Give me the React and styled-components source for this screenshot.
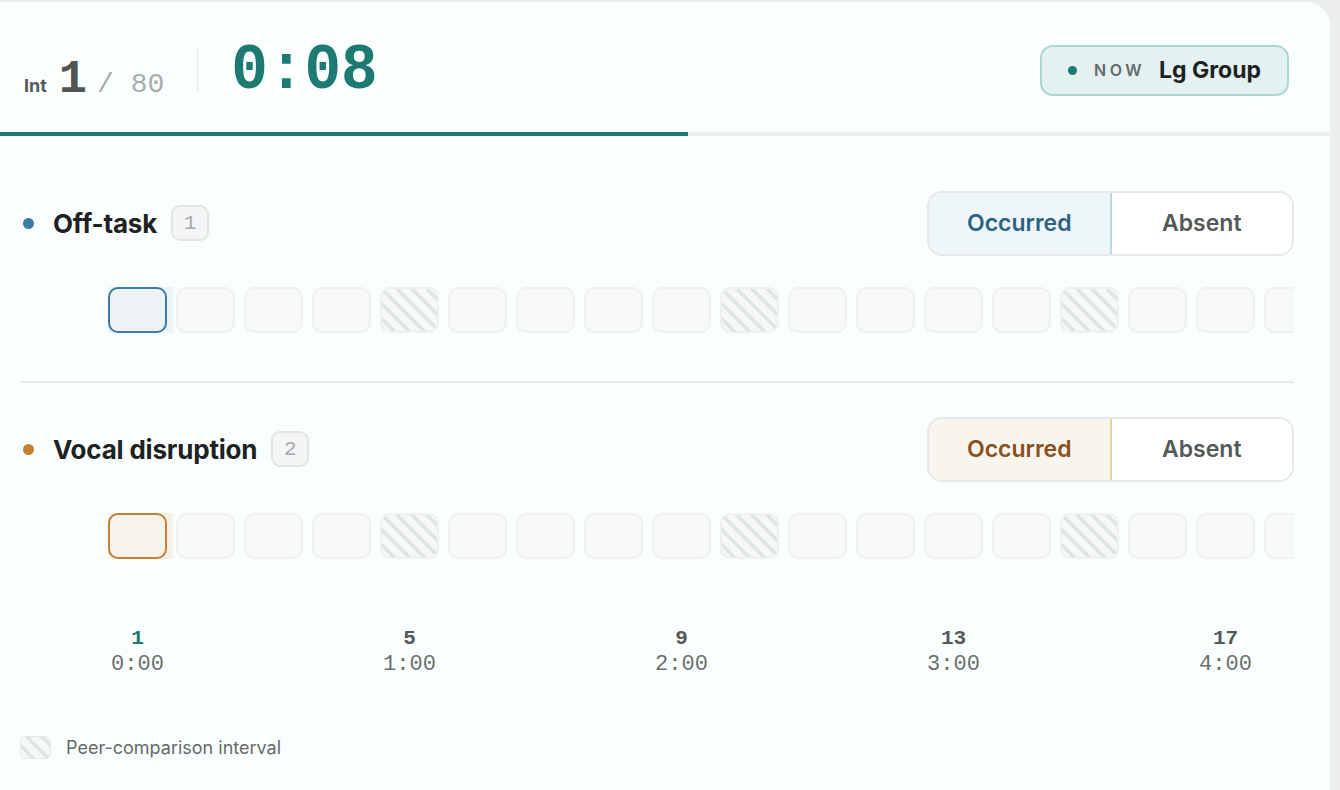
import React from "react";
import styled, { createGlobalStyle, css } from "styled-components";

const Global = createGlobalStyle`
  html, body { margin: 0; padding: 0; background: #eceeee; }
  body { font-family: Inter, "Noto Sans", sans-serif; }
  * { box-sizing: border-box; }
`;

const Page = styled.div`
  padding: 2px 10px 0 0;
  height: 790px;
  overflow: hidden;
`;

const Card = styled.div`
  background: #fbfefe;
  border-top-right-radius: 24px;
  height: 788px;
  overflow: hidden;
`;

const Header = styled.header`
  height: 134px;
  display: flex;
  flex-direction: column;
`;

const HeaderRow = styled.div`
  flex: 1;
  display: flex;
  align-items: center;
  padding: 6px 41px 0 24px;
`;

const Counter = styled.div`
  display: flex;
  align-items: baseline;
  padding-top: 18px;
`;

const IntLabel = styled.span`
  font-size: 18px;
  font-weight: 700;
  color: #555a5a;
  margin-right: 12px;
`;

const IntNum = styled.span`
  font-family: "Liberation Mono", monospace;
  font-weight: 700;
  font-size: 47px;
  color: #505454;
  line-height: 1;
`;

const IntTotal = styled.span`
  font-family: "Liberation Mono", monospace;
  font-size: 28px;
  color: #a8acac;
  margin-left: 10px;
`;

const VDivider = styled.div`
  width: 1px;
  height: 44px;
  background: #e6e9e9;
  margin: 0 33px 0 33px;
`;

const Clock = styled.div`
  font-family: "Liberation Mono", monospace;
  font-weight: 700;
  font-size: 61px;
  color: #1d7a72;
  line-height: 1;
  transform: scaleY(1.06);
`;

const NowBadge = styled.div`
  margin-left: auto;
  height: 51px;
  display: flex;
  align-items: center;
  padding: 0 26px 0 26px;
  background: #e3f2f1;
  border: 2px solid #acd6d1;
  border-radius: 13px;
`;

const NowDot = styled.span`
  width: 9px;
  height: 9px;
  border-radius: 50%;
  background: #1d7a72;
  margin-right: 17px;
`;

const NowLabel = styled.span`
  font-size: 16px;
  font-weight: 600;
  letter-spacing: 3.5px;
  color: #666a6a;
  margin-right: 14px;
`;

const NowName = styled.span`
  font-size: 23px;
  font-weight: 700;
  color: #1e2222;
`;

const Progress = styled.div`
  height: 4px;
  background: #eceeee;
`;

const ProgressFill = styled.div`
  height: 100%;
  background: #1d7a72;
`;

const Body = styled.main`
  padding: 20px 36px 0 20px;
`;

const Behavior = styled.section`
  padding: ${(p) => (p.$first ? "35px 0 48px" : "34px 0 48px")};
  border-bottom: ${(p) => (p.$last ? "none" : "2px solid #e8ebeb")};
`;

const BehaviorHead = styled.div`
  display: flex;
  align-items: center;
  height: 64px;
`;

const Dot = styled.span`
  width: 11px;
  height: 11px;
  border-radius: 50%;
  background: ${(p) => p.$color};
  margin: 0 19px 0 3px;
`;

const Name = styled.span`
  font-size: 26px;
  font-weight: 700;
  color: #1f2222;
  letter-spacing: -0.2px;
`;

const Key = styled.span`
  margin-left: 14px;
  width: 38px;
  height: 36px;
  display: inline-flex;
  align-items: center;
  justify-content: center;
  border: 2px solid #e2e5e6;
  background: #f3f5f6;
  border-radius: 9px;
  font-family: "Liberation Mono", monospace;
  font-size: 21px;
  color: #a5a9aa;
`;

const Toggle = styled.div`
  margin-left: auto;
  display: flex;
  width: 367px;
  height: 65px;
  border: 2px solid #e6e8e8;
  border-radius: 15px;
  overflow: hidden;
  background: #ffffff;
`;

const ToggleBtn = styled.button`
  flex: 1;
  border: none;
  margin: 0;
  font-family: Inter, "Noto Sans", sans-serif;
  font-size: 23px;
  font-weight: 600;
  cursor: pointer;
  ${(p) =>
    p.$active
      ? css`
          background: ${p.$bg};
          color: ${p.$fg};
          border-right: 2px solid ${p.$line};
        `
      : css`
          background: #ffffff;
          color: #555959;
        `}
`;

const Track = styled.div`
  margin-top: 32px;
  padding-left: 88px;
  display: flex;
  gap: 9px;
  overflow: hidden;
  isolation: isolate;
`;

const hatch = css`
  background: repeating-linear-gradient(
    45deg,
    #f6f7f7 0px,
    #f6f7f7 7px,
    #e1e4e6 7px,
    #e1e4e6 10.5px
  );
`;

const Cell = styled.div`
  position: relative;
  flex: 0 0 59px;
  height: 46px;
  border-radius: 10px;
  border: 2px solid #eff0f0;
  background: #f7f8f8;
  ${(p) => p.$peer && hatch}
  ${(p) =>
    p.$current &&
    css`
      border-color: ${p.$color};
      background: ${p.$bg};
      &::before {
        content: "";
        position: absolute;
        left: -2px;
        top: -2px;
        width: 65px;
        height: 46px;
        background: ${p.$halo};
        z-index: -1;
      }
    `}
`;

const Axis = styled.div`
  margin-top: 19px;
  padding-left: 88px;
  display: flex;
  gap: 9px;
  overflow: hidden;
`;

const Tick = styled.div`
  flex: 0 0 59px;
  display: flex;
  flex-direction: column;
  align-items: center;
  font-family: "Liberation Mono", monospace;
  font-size: 22px;
  line-height: 26px;
  white-space: nowrap;
`;

const TickNum = styled.span`
  font-weight: 700;
  font-size: 21px;
  color: ${(p) => (p.$current ? "#1d7a72" : "#555959")};
`;

const TickTime = styled.span`
  color: #6b6f6f;
`;

const Legend = styled.div`
  margin-top: 58px;
  display: flex;
  align-items: center;
  gap: 15px;
`;

const LegendSwatch = styled.span`
  width: 31px;
  height: 23px;
  border-radius: 5px;
  border: 1.5px solid #e6e9ea;
  ${hatch}
`;

const LegendText = styled.span`
  font-size: 18px;
  color: #666a6a;
`;

const behaviors = [
  {
    name: "Off-task",
    key: "1",
    color: "#3a7ca5",
    activeBg: "#eef6f9",
    activeFg: "#2a6384",
    line: "#bcd6e4",
    cellBg: "#edf3f6",
    halo: "#eaf3f7",
  },
  {
    name: "Vocal disruption",
    key: "2",
    color: "#c47f35",
    activeBg: "#f8f5ee",
    activeFg: "#875220",
    line: "#ebcfa8",
    cellBg: "#f8f3ec",
    halo: "#f6f1e7",
  },
];

const CELLS = 18;
const peer = new Set([4, 9, 14]);
const ticks = {
  0: ["1", "0:00"],
  4: ["5", "1:00"],
  8: ["9", "2:00"],
  12: ["13", "3:00"],
  16: ["17", "4:00"],
};

export default function App() {
  const progress = 688;
  return (
    <>
      <Global />
      <Page>
        <Card>
          <Header>
            <HeaderRow>
              <Counter>
                <IntLabel>Int</IntLabel>
                <IntNum>1</IntNum>
                <IntTotal>/ 80</IntTotal>
              </Counter>
              <VDivider />
              <Clock>0:08</Clock>
              <NowBadge>
                <NowDot />
                <NowLabel>NOW</NowLabel>
                <NowName>Lg Group</NowName>
              </NowBadge>
            </HeaderRow>
            <Progress>
              <ProgressFill style={{ width: progress }} />
            </Progress>
          </Header>
          <Body>
            {behaviors.map((b, i) => (
              <Behavior key={b.name} $first={i === 0} $last={i === behaviors.length - 1}>
                <BehaviorHead>
                  <Dot $color={b.color} />
                  <Name>{b.name}</Name>
                  <Key>{b.key}</Key>
                  <Toggle>
                    <ToggleBtn $active $bg={b.activeBg} $fg={b.activeFg} $line={b.line}>
                      Occurred
                    </ToggleBtn>
                    <ToggleBtn>Absent</ToggleBtn>
                  </Toggle>
                </BehaviorHead>
                <Track>
                  {Array.from({ length: CELLS }, (_, c) => (
                    <Cell
                      key={c}
                      $peer={peer.has(c)}
                      $current={c === 0}
                      $color={b.color}
                      $bg={b.cellBg}
                      $halo={b.halo}
                    />
                  ))}
                </Track>
              </Behavior>
            ))}
            <Axis>
              {Array.from({ length: CELLS }, (_, c) => (
                <Tick key={c}>
                  {ticks[c] && (
                    <>
                      <TickNum $current={c === 0}>{ticks[c][0]}</TickNum>
                      <TickTime>{ticks[c][1]}</TickTime>
                    </>
                  )}
                </Tick>
              ))}
            </Axis>
            <Legend>
              <LegendSwatch />
              <LegendText>Peer-comparison interval</LegendText>
            </Legend>
          </Body>
        </Card>
      </Page>
    </>
  );
}
